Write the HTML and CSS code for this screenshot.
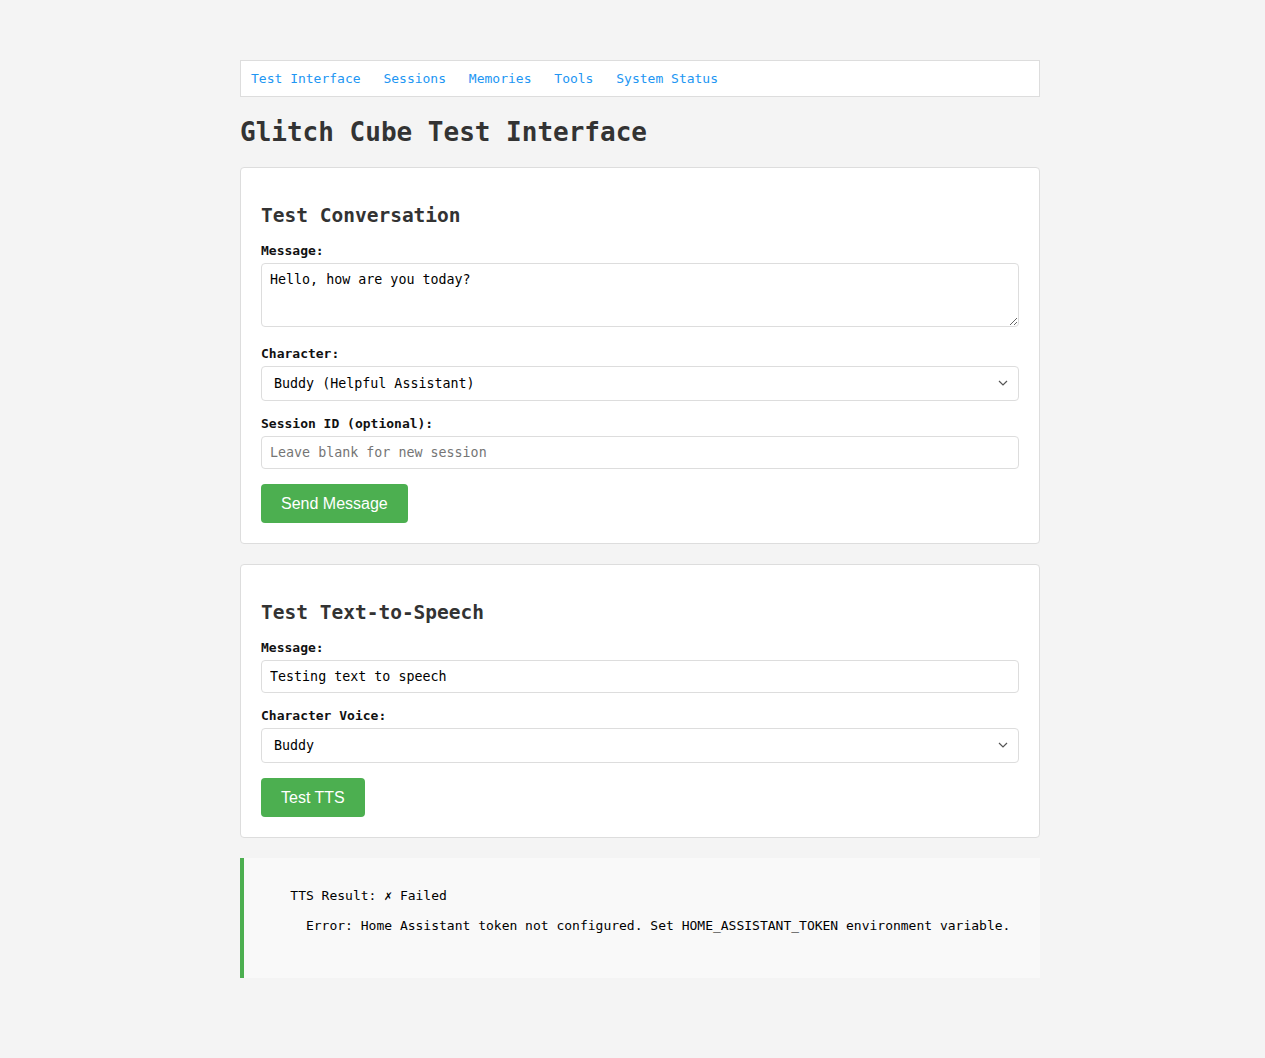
FILE: index.html
```html
<!DOCTYPE html>
<html lang="en">
<head>
<meta charset="utf-8">
<title>Glitch Cube Test Interface</title>
<link rel="stylesheet" href="styles.css">
</head>
<body>
<div class="page">
  <nav class="nav">
    <a href="#">Test Interface</a> <a href="#">Sessions</a> <a href="#">Memories</a> <a href="#">Tools</a> <a href="#">System Status</a>
  </nav>
  <h1 class="title">Glitch Cube Test Interface</h1>

  <section class="card">
    <h2 class="card-title">Test Conversation</h2>
    <div class="field">
      <label class="label">Message:</label>
      <textarea class="control textarea">Hello, how are you today?</textarea>
    </div>
    <div class="field">
      <label class="label">Character:</label>
      <div class="select-wrap">
        <select class="control select">
          <option>Buddy (Helpful Assistant)</option>
        </select>
        <svg class="chevron" width="10" height="6" viewBox="0 0 10 6"><path d="M1 1 L5 5 L9 1" fill="none" stroke="#555" stroke-width="1.2"/></svg>
      </div>
    </div>
    <div class="field">
      <label class="label">Session ID (optional):</label>
      <input class="control input" type="text" placeholder="Leave blank for new session">
    </div>
    <button class="btn">Send Message</button>
  </section>

  <section class="card">
    <h2 class="card-title">Test Text-to-Speech</h2>
    <div class="field">
      <label class="label">Message:</label>
      <input class="control input" type="text" value="Testing text to speech">
    </div>
    <div class="field">
      <label class="label">Character Voice:</label>
      <div class="select-wrap">
        <select class="control select">
          <option>Buddy</option>
        </select>
        <svg class="chevron" width="10" height="6" viewBox="0 0 10 6"><path d="M1 1 L5 5 L9 1" fill="none" stroke="#555" stroke-width="1.2"/></svg>
      </div>
    </div>
    <button class="btn">Test TTS</button>
  </section>

  <div class="result">
    TTS Result: ✗ Failed

      Error: Home Assistant token not configured. Set HOME_ASSISTANT_TOKEN environment variable.

  </div>
</div>
</body>
</html>
```

FILE: styles.css
```css
* { box-sizing: border-box; }

html, body {
  margin: 0;
  padding: 0;
  background: #f4f4f4;
}

body {
  font-family: "DejaVu Sans Mono", "Liberation Mono", monospace;
  color: #333;
  font-size: 13px;
}

.page {
  width: 800px;
  margin: 0 0 0 240px;
  padding: 60px 0 80px;
}

.nav {
  background: #fff;
  border: 1px solid #ddd;
  padding: 10px;
  line-height: 15px;
  margin-bottom: 20px;
  font-size: 13px;
}

.nav a {
  color: #2196f3;
  text-decoration: none;
  margin-right: 15px;
}

.title {
  font-size: 26px;
  line-height: 30px;
  font-weight: bold;
  margin: 0 0 20px;
  color: #333;
}

.card {
  background: #fff;
  border: 1px solid #ddd;
  border-radius: 4px;
  padding: 20px;
  margin-bottom: 20px;
}

.card-title {
  font-size: 19.5px;
  line-height: 23px;
  margin: 16px 0;
  color: #333;
}

.field {
  margin-bottom: 15px;
}

.label {
  display: block;
  font-weight: bold;
  font-size: 13px;
  line-height: 15px;
  margin-bottom: 5px;
  color: #111;
}

.control {
  display: block;
  width: 100%;
  font-family: "DejaVu Sans Mono", "Liberation Mono", monospace;
  font-size: 13.33px;
  color: #000;
  background: #fff;
  border: 1px solid #ddd;
  border-radius: 4px;
  padding: 8px;
  margin: 0;
}

.textarea {
  height: 64px;
  line-height: 16px;
  resize: vertical;
  margin-bottom: 19px;
}

.field:has(.textarea) {
  margin-bottom: 0;
}

.input {
  height: 33px;
  line-height: 15px;
}

.input::placeholder {
  color: #757575;
}

.select-wrap {
  position: relative;
}

.select {
  -webkit-appearance: none;
  appearance: none;
  height: 35px;
  padding: 0 30px 0 12px;
  line-height: 33px;
}

.chevron {
  position: absolute;
  right: 11px;
  top: 14px;
  pointer-events: none;
}

.btn {
  display: block;
  background: #4caf50;
  color: #fff;
  border: none;
  border-radius: 4px;
  padding: 10px 20px;
  height: 39px;
  font-family: "Liberation Sans", Arial, sans-serif;
  font-size: 16px;
  line-height: 19px;
}

.result {
  background: #f9f9f9;
  border-left: 4px solid #4caf50;
  padding: 15px;
  white-space: pre-wrap;
  font-size: 13px;
  line-height: 15px;
  color: #000;
}
```
